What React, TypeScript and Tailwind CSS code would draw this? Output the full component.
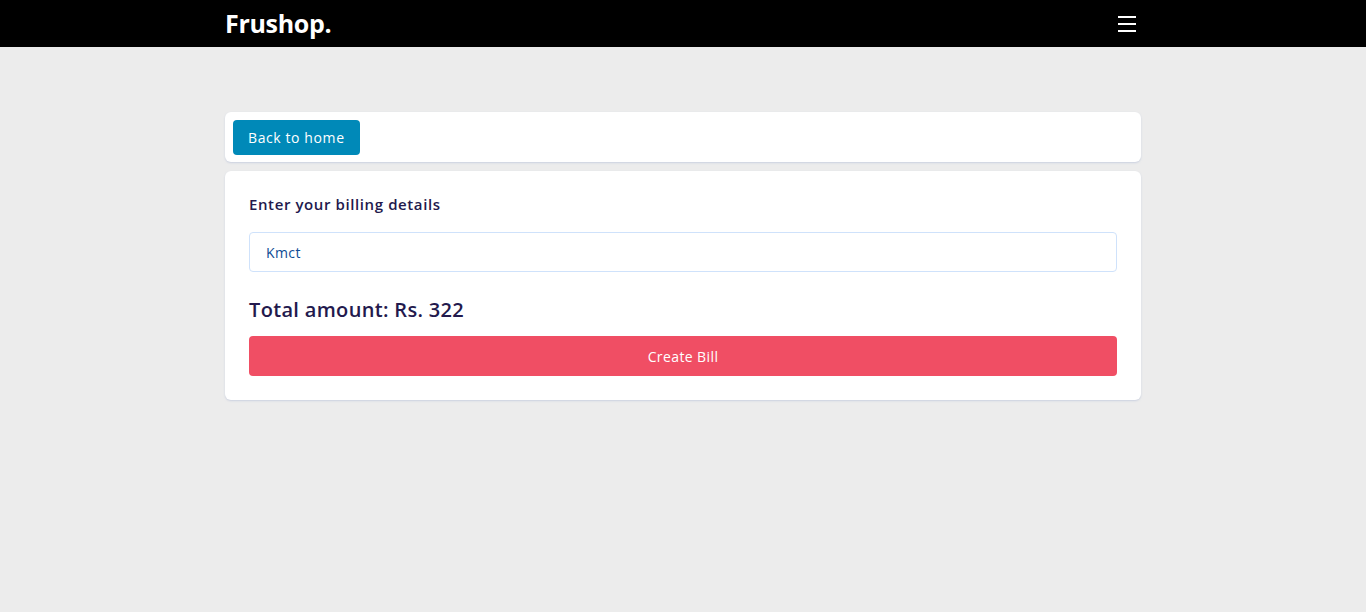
export default function App() {
  return (
    <div
      className="min-h-[612px] w-full bg-[#ececec]"
      style={{ fontFamily: '"Open Sans", "Liberation Sans", sans-serif' }}
    >
      <header className="h-[47px] w-full bg-black">
        <div className="mx-auto flex h-full w-[916px] items-center justify-between">
          <span className="text-[25px] font-bold tracking-[-0.3px] text-white">Frushop.</span>
          <button aria-label="Menu" className="mr-[5px] flex flex-col gap-[5px]">
            <span className="block h-[2px] w-[18px] bg-white" />
            <span className="block h-[2px] w-[18px] bg-white" />
            <span className="block h-[2px] w-[18px] bg-white" />
          </button>
        </div>
      </header>

      <main className="mx-auto mt-[65px] flex w-[916px] flex-col gap-[9px]">
        <div className="rounded-[6px] bg-white px-[8px] pb-[7px] pt-[8px] shadow-[0_1px_2px_rgba(180,190,215,0.6)]">
          <button className="h-[35px] rounded-[4px] bg-[#0089b8] px-[15px] text-[14px] tracking-[0.6px] text-white">
            Back to home
          </button>
        </div>

        <div className="rounded-[6px] bg-white px-[24px] pb-[24px] pt-[23px] shadow-[0_1px_2px_rgba(180,190,215,0.6)]">
          <h2 className="text-[15px] font-semibold leading-[20px] tracking-[0.6px] text-[#23194d]">
            Enter your billing details
          </h2>
          <input
            defaultValue="Kmct"
            className="mt-[18px] h-[40px] w-full rounded-[4px] border border-[#cfe2fb] px-[16px] text-[14px] tracking-[0.4px] text-[#0d4c94] outline-none"
          />
          <div className="mt-[25px] text-[20px] font-semibold leading-[26px] tracking-[0.33px] text-[#23194d]">
            Total amount: Rs. 322
          </div>
          <button className="mt-[13px] h-[40px] w-full rounded-[4px] bg-[#f04e64] text-[14px] tracking-[0.4px] text-white">
            Create Bill
          </button>
        </div>
      </main>
    </div>
  );
}
